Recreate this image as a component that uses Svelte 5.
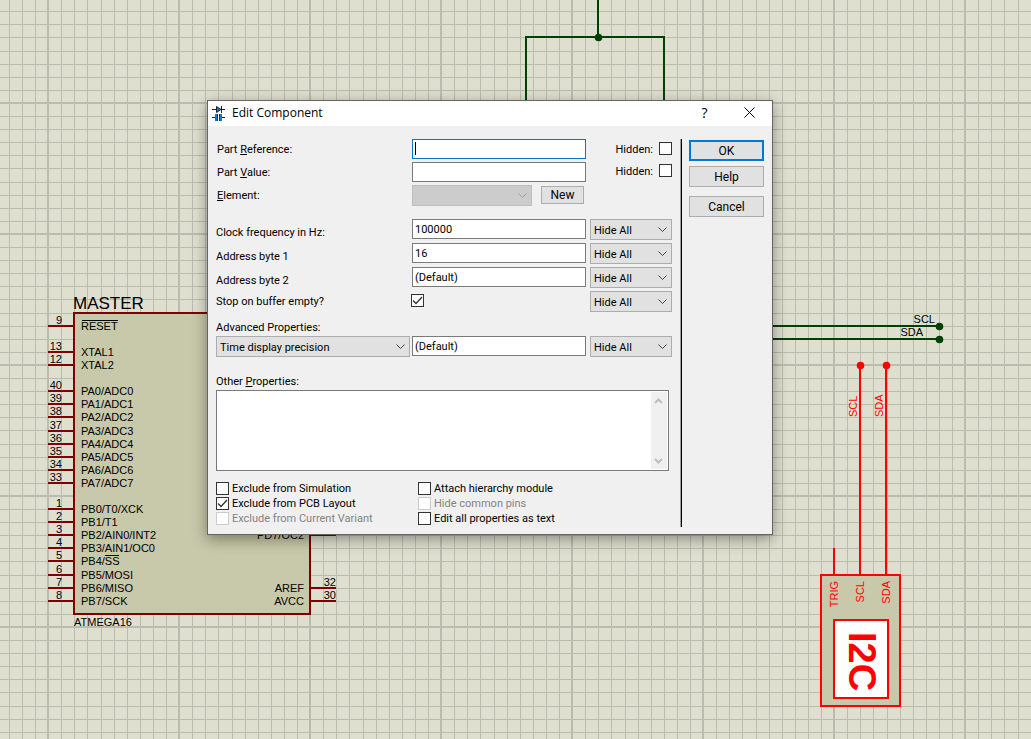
<script>
  let innerWidth = $state(1031);
  let innerHeight = $state(739);

  const PITCH = 13.1;
  const ORIGIN_X = 48.65;
  const ORIGIN_Y = 103.45;

  function gridLines(origin, extent) {
    const lines = [];
    const first = Math.ceil(-origin / PITCH);
    for (let k = first; origin + k * PITCH < extent; k++) {
      lines.push({ at: Math.floor(origin + k * PITCH), major: k % 10 === 0 });
    }
    return lines;
  }

  const columns = $derived(gridLines(ORIGIN_X, innerWidth));
  const rows = $derived(gridLines(ORIGIN_Y, innerHeight));

  const leftPins = [
    { y: 326, no: '9', name: 'RESET', bar: [82, 118] },
    { y: 352, no: '13', name: 'XTAL1' },
    { y: 365, no: '12', name: 'XTAL2' },
    { y: 391, no: '40', name: 'PA0/ADC0' },
    { y: 404, no: '39', name: 'PA1/ADC1' },
    { y: 417, no: '38', name: 'PA2/ADC2' },
    { y: 431, no: '37', name: 'PA3/ADC3' },
    { y: 444, no: '36', name: 'PA4/ADC4' },
    { y: 457, no: '35', name: 'PA5/ADC5' },
    { y: 470, no: '34', name: 'PA6/ADC6' },
    { y: 483, no: '33', name: 'PA7/ADC7' },
    { y: 509, no: '1', name: 'PB0/T0/XCK' },
    { y: 522, no: '2', name: 'PB1/T1' },
    { y: 535, no: '3', name: 'PB2/AIN0/INT2' },
    { y: 548, no: '4', name: 'PB3/AIN1/OC0' },
    { y: 561, no: '5', name: 'PB4/SS', bar: [105, 119] },
    { y: 575, no: '6', name: 'PB5/MOSI' },
    { y: 588, no: '7', name: 'PB6/MISO' },
    { y: 601, no: '8', name: 'PB7/SCK' }
  ];

  const rightPins = [
    { y: 535, no: '', name: 'PD7/OC2' },
    { y: 588, no: '32', name: 'AREF' },
    { y: 601, no: '30', name: 'AVCC' }
  ];

  const fields = [
    { id: 'clock', label: 'Clock frequency in Hz:', value: '100000' },
    { id: 'addr1', label: 'Address byte 1', value: '16' },
    { id: 'addr2', label: 'Address byte 2', value: '(Default)' }
  ];

  const flags = [
    { label: 'Exclude from Simulation' },
    { label: 'Attach hierarchy module' },
    { label: 'Exclude from PCB Layout', checked: true },
    { label: 'Hide common pins', disabled: true },
    { label: 'Exclude from Current Variant', disabled: true },
    { label: 'Edit all properties as text' }
  ];
</script>

<svelte:window bind:innerWidth bind:innerHeight />

<main class="workspace">
  <svg class="schematic" aria-label="Schematic">
    <g fill="#bcbcae">
      {#each columns as c}
        <rect x={c.major ? c.at - 1 : c.at} y="0" width={c.major ? 2 : 1} height="100%" />
      {/each}
      {#each rows as r}
        <rect x="0" y={r.major ? r.at - 1 : r.at} width="100%" height={r.major ? 2 : 1} />
      {/each}
    </g>

    <g class="wire">
      <path d="M598 0V37M526 101V37H664V101M772 326H939M772 339H939" />
      <circle cx="598.5" cy="37.5" r="3.8" />
      <circle cx="939.5" cy="326.5" r="3.8" />
      <circle cx="939.5" cy="339.5" r="3.8" />
    </g>
    <text x="935" y="323" text-anchor="end">SCL</text>
    <text x="923" y="336" text-anchor="end">SDA</text>

    <rect class="chip" x="74" y="313" width="236" height="301" />
    <text class="ref" x="73" y="309">MASTER</text>
    <text x="74" y="626">ATMEGA16</text>
    {#each leftPins as p}
      <path class="pin" d="M48 {p.y}H74" />
      <text x="62" y={p.y - 2} text-anchor="end">{p.no}</text>
      <text x="81" y={p.y + 4}>{p.name}</text>
      {#if p.bar}
        <path class="bar" d="M{p.bar[0]} {p.y - 5.5}H{p.bar[1]}" />
      {/if}
    {/each}
    {#each rightPins as p}
      <path class="pin" d="M310 {p.y}H336" />
      {#if p.no}
        <text x="336" y={p.y - 2} text-anchor="end">{p.no}</text>
      {/if}
      <text x="304" y={p.y + 4} text-anchor="end">{p.name}</text>
    {/each}

    <g class="probe">
      <path d="M860 365V575M886 365V575M834 548V575" />
      <circle cx="860.5" cy="365.5" r="3.8" />
      <circle cx="886.5" cy="365.5" r="3.8" />
      <rect x="821" y="575" width="79" height="131" fill="#c8c8aa" />
      <rect x="834" y="620" width="54" height="78" fill="#fff" />
      <text transform="translate(857 417) rotate(-90)">SCL</text>
      <text transform="translate(883 417) rotate(-90)">SDA</text>
      <text transform="translate(838 581) rotate(-90)" text-anchor="end">TRIG</text>
      <text transform="translate(864 581) rotate(-90)" text-anchor="end">SCL</text>
      <text transform="translate(890 581) rotate(-90)" text-anchor="end">SDA</text>
      <text class="logo" transform="translate(849 632) rotate(90)">I2C</text>
    </g>
  </svg>

  <div class="dialog" role="dialog" aria-labelledby="dialog-title">
    <header class="titlebar">
      <svg width="14" height="16" viewBox="0 0 14 16" aria-hidden="true">
        <path d="M0 4.5H13M0 12.5H4M10 12.5H13" stroke="#222" fill="none" />
        <path d="M4.5 1.5V7.5L9 4.5Z" fill="#1878c0" stroke="#222" />
        <path d="M9.5 1V8" stroke="#222" />
        <rect x="3" y="9" width="3" height="7" fill="#1878c0" />
        <rect x="7" y="9" width="3" height="7" fill="#1878c0" />
        <path d="M5.5 9V16M7.5 9V16" stroke="#234" />
      </svg>
      <h1 id="dialog-title">Edit Component</h1>
      <button class="caption" aria-label="Context help">?</button>
      <button class="caption" aria-label="Close">
        <svg width="11" height="11" viewBox="0 0 11 11"><path d="M0.5 0.5L10.5 10.5M10.5 0.5L0.5 10.5" stroke="#000" fill="none" /></svg>
      </button>
    </header>

    <form class="body" onsubmit={(e) => e.preventDefault()}>
      <div class="main">
        <div class="identity">
          <div class="names">
            <label for="reference">Part <u>R</u>eference:</label>
            <div class="focused">
              <input id="reference" type="text" />
              <span class="caret"></span>
            </div>
            <label for="value">Part <u>V</u>alue:</label>
            <input id="value" type="text" />
            <label for="element"><u>E</u>lement:</label>
            <div class="element">
              <select id="element" disabled></select>
              <button class="new" type="button">New</button>
            </div>
          </div>
          <div class="hidden-flags">
            <label><span>Hidden:</span><input type="checkbox" /></label>
            <label><span>Hidden:</span><input type="checkbox" /></label>
          </div>
        </div>

        <div class="properties">
          {#each fields as f}
            <label class="low" for={f.id}>{f.label}</label>
            <input id={f.id} type="text" value={f.value} />
            <select aria-label="{f.label} visibility"><option>Hide All</option></select>
          {/each}
          <label for="stop">Stop on buffer empty?</label>
          <input id="stop" type="checkbox" checked />
          <select aria-label="Stop on buffer empty visibility"><option>Hide All</option></select>
        </div>

        <label class="heading advanced-label" for="advanced">Advanced Properties:</label>
        <div class="advanced">
          <select id="advanced"><option>Time display precision</option></select>
          <input type="text" value="(Default)" aria-label="Time display precision" />
          <select aria-label="Advanced property visibility"><option>Hide All</option></select>
        </div>

        <label class="heading other-label" for="other">Other <u>P</u>roperties:</label>
        <div class="memo">
          <textarea id="other"></textarea>
          <div class="scroll" aria-hidden="true">
            <svg width="9" height="6" viewBox="0 0 9 6"><path d="M1 5L4.5 1.5L8 5" /></svg>
            <svg width="9" height="6" viewBox="0 0 9 6"><path d="M1 1L4.5 4.5L8 1" /></svg>
          </div>
        </div>

        <div class="flags">
          {#each flags as f}
            <label class:off={f.disabled}>
              <input type="checkbox" checked={f.checked} disabled={f.disabled} />
              {f.label}
            </label>
          {/each}
        </div>
      </div>

      <div class="divider"></div>

      <div class="actions">
        <button class="default" type="submit">OK</button>
        <button type="button">Help</button>
        <button class="cancel" type="button">Cancel</button>
      </div>
    </form>
  </div>
</main>

<style>
  :global(body) {
    margin: 0;
    overflow: hidden;
  }

  .workspace {
    position: relative;
    height: 100vh;
    overflow: hidden;
    background: #dfdfd0;
    color: #000;
    font-family: Roboto, "Liberation Sans", sans-serif;
    font-size: 11px;
  }

  .schematic {
    display: block;
    width: 100%;
    height: 100%;
    font-family: "Liberation Sans", Arial, sans-serif;
    font-size: 11px;
  }
  .schematic .ref { font-size: 17px; }
  .wire path { fill: none; stroke: #004000; stroke-width: 2; }
  .wire circle { fill: #004000; }
  .chip { fill: #c8c8aa; stroke: #800000; stroke-width: 2; }
  .pin { stroke: #800000; stroke-width: 2; }
  .bar { stroke: #000; stroke-width: 1; }
  .probe path { fill: none; stroke: #f00; stroke-width: 2; }
  .probe rect { stroke: #f00; stroke-width: 2; }
  .probe circle, .probe text { fill: #f00; }
  .schematic .logo { font-size: 38px; font-weight: bold; }

  .dialog {
    position: absolute;
    left: 207px;
    top: 100px;
    width: 566px;
    box-sizing: border-box;
    border: 1px solid #646464;
    background: #f0f0f0;
    box-shadow: 0 4px 14px rgba(0, 0, 0, 0.4);
  }

  .titlebar {
    display: flex;
    align-items: center;
    box-sizing: border-box;
    height: 25px;
    padding: 0 0 2px 4px;
    background: #fff;
  }
  h1 {
    flex: 1;
    margin: 0 0 0 6px;
    font: 12px "Open Sans", sans-serif;
  }
  .caption {
    display: flex;
    align-items: center;
    justify-content: center;
    width: 45px;
    height: 23px;
    padding: 0;
    border: 0;
    background: none;
    font: 14px "Open Sans", sans-serif;
  }

  .body {
    display: flex;
    padding: 13px 8px 7px;
  }
  .main { flex: 1; min-width: 0; }

  input, select, textarea, button {
    box-sizing: border-box;
    margin: 0;
    font-family: inherit;
    font-size: 11px;
    color: #000;
    outline: none;
    border-radius: 0;
  }
  input[type="text"] {
    width: 100%;
    height: 20px;
    padding: 0 2px;
    border: 1px solid #7a7a7a;
    background: #fff;
  }
  select {
    appearance: none;
    width: 100%;
    height: 21px;
    padding: 1px 20px 0 3px;
    border: 1px solid #adadad;
    background: #e1e1e1 url("data:image/svg+xml,%3Csvg xmlns='http://www.w3.org/2000/svg' width='9' height='6'%3E%3Cpath d='M.5.5l4 4 4-4' fill='none' stroke='%23444'/%3E%3C/svg%3E") no-repeat right 4px center;
  }
  select:disabled {
    border-color: #bfbfbf;
    opacity: 1;
    background: #ccc url("data:image/svg+xml,%3Csvg xmlns='http://www.w3.org/2000/svg' width='9' height='6'%3E%3Cpath d='M.5.5l4 4 4-4' fill='none' stroke='%23a0a0a0'/%3E%3C/svg%3E") no-repeat right 4px center;
  }
  input[type="checkbox"] {
    appearance: none;
    flex: none;
    width: 13px;
    height: 13px;
    border: 1px solid #333;
    background: #fff;
  }
  input[type="checkbox"]:checked {
    background: #fff url("data:image/svg+xml,%3Csvg xmlns='http://www.w3.org/2000/svg' width='11' height='11'%3E%3Cpath d='M1 5.5l3 3L10 2' fill='none' stroke='%23333' stroke-width='1.3'/%3E%3C/svg%3E") center no-repeat;
  }
  input[type="checkbox"]:disabled { border-color: #ccc; }

  .identity { display: flex; }
  .names {
    display: grid;
    grid-template-columns: 195px 174px;
    row-gap: 3px;
    align-items: center;
    padding-left: 1px;
  }
  .focused { position: relative; display: flex; }
  .focused input {
    border-color: #0078d7;
    caret-color: transparent;
  }
  .caret {
    position: absolute;
    left: 3px;
    top: 3px;
    width: 1px;
    height: 13px;
    background: #000;
  }
  .element { display: flex; align-items: flex-start; gap: 9px; }
  .element select { width: 120px; }
  .hidden-flags {
    flex: 1;
    display: flex;
    flex-direction: column;
    gap: 9px;
    padding-top: 3px;
  }
  .hidden-flags label {
    display: flex;
    align-items: center;
    justify-content: flex-end;
    gap: 6px;
    height: 13px;
  }
  .hidden-flags span { padding-top: 2px; }

  .properties {
    display: grid;
    grid-template-columns: 196px 1fr 86px;
    grid-auto-rows: 21px;
    row-gap: 3px;
    margin-top: 13px;
  }
  .properties label { align-self: center; }
  .properties .low { padding-top: 6px; }
  .properties select { margin-left: 4px; width: 82px; }
  #stop { margin: 3px 0 0 -1px; }

  .heading {
    display: block;
    height: 14px;
    line-height: 14px;
    margin-bottom: 1px;
  }
  .advanced-label { margin-top: 9px; }
  .other-label { margin-top: 18px; }
  .advanced {
    display: grid;
    grid-template-columns: 194px 1fr 82px;
    column-gap: 2px;
  }
  .advanced input { width: 174px; }

  .memo { position: relative; display: flex; margin-right: 3px; }
  textarea {
    width: 100%;
    height: 81px;
    padding: 2px 18px 2px 3px;
    border: 1px solid #7a7a7a;
    background: #fff;
    resize: none;
    overflow: hidden;
  }
  .scroll {
    position: absolute;
    top: 2px;
    right: 2px;
    bottom: 2px;
    width: 16px;
    box-sizing: border-box;
    display: flex;
    flex-direction: column;
    align-items: center;
    justify-content: space-between;
    padding: 6px 1px 5px 0;
    background: #f0f0f0;
  }
  .scroll path { fill: none; stroke: #bfbfbf; stroke-width: 2; }

  .flags {
    display: grid;
    grid-template-columns: 202px 1fr;
    grid-auto-rows: 15px;
    margin-top: 10px;
    margin-bottom: 1px;
  }
  .flags label { display: flex; align-items: center; gap: 3px; }
  .flags .off { color: #838383; }

  .divider {
    width: 1px;
    margin: 0 7px 0 8px;
    border-left: 1px solid #a0a0a0;
    background: #000;
  }

  .actions { display: flex; flex-direction: column; gap: 5px; padding-top: 1px; }
  .actions button, .new {
    width: 75px;
    height: 21px;
    padding: 0;
    border: 1px solid #adadad;
    background: #e1e1e1;
    font-size: 12px;
  }
  .actions .default { border: 2px solid #0078d7; }
  .actions .cancel { margin-top: 4px; }
  .element .new { width: 43px; height: 18px; margin-top: 1px; }
</style>
